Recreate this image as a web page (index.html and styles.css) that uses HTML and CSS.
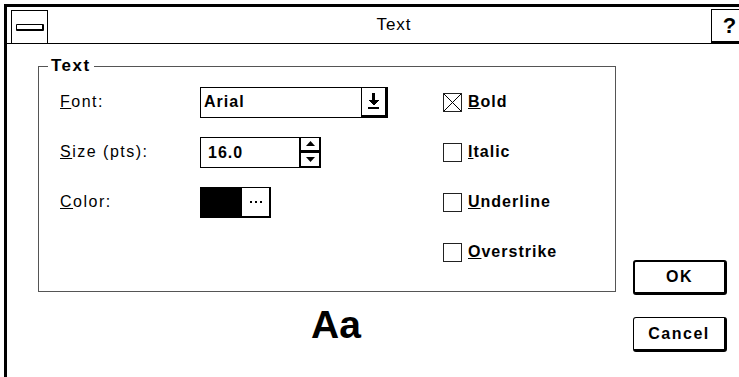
FILE: index.html
```html
<!DOCTYPE html>
<html lang="en">
<head>
<meta charset="UTF-8" />
<title>Text</title>
<link rel="stylesheet" href="styles.css">
</head>
<body>
    <div class="window">
        <div class="titlebar">
            <div class="sysmenu"><span class="sysmenu-bar"></span></div>
            <div class="title">Text</div>
            <div class="help">?</div>
        </div>

        <div class="content">
            <div class="main">
                <fieldset class="group">
                    <legend>Text</legend>
                    <div class="fields">
                        <label class="label"><u>F</u>ont:</label>
                        <div class="combo">
                            <span class="combo-text">Arial</span>
                            <span class="combo-btn">
                                <svg width="11" height="16" viewBox="0 0 11 16" shape-rendering="crispEdges">
                                    <rect x="4" y="0" width="3" height="7" fill="#000" />
                                    <polygon points="0,7 11,7 5.5,12.5" fill="#000" />
                                    <rect x="0" y="14" width="11" height="2" fill="#000" />
                                </svg>
                            </span>
                        </div>
                        <label class="check"><span class="box">
                            <svg width="17" height="17" viewBox="0 0 17 17">
                                <line x1="0" y1="0" x2="17" y2="17" stroke="#000" stroke-width="1" />
                                <line x1="17" y1="0" x2="0" y2="17" stroke="#000" stroke-width="1" />
                            </svg>
                        </span><span><u>B</u>old</span></label>

                        <label class="label"><u>S</u>ize (pts):</label>
                        <div class="size">
                            <span class="size-input">16.0</span>
                            <span class="spin">
                                <span class="spin-half">
                                    <svg width="9" height="5" viewBox="0 0 9 5"><polygon points="0,5 9,5 4.5,0" fill="#000" /></svg>
                                </span>
                                <span class="spin-half">
                                    <svg width="9" height="5" viewBox="0 0 9 5"><polygon points="0,0 9,0 4.5,5" fill="#000" /></svg>
                                </span>
                            </span>
                        </div>
                        <label class="check"><span class="box"></span><span><u>I</u>talic</span></label>

                        <label class="label"><u>C</u>olor:</label>
                        <div class="color">
                            <span class="swatch"></span>
                            <span class="dots">
                                <svg width="12" height="2" viewBox="0 0 12 2" shape-rendering="crispEdges">
                                    <rect x="0" y="0" width="2" height="2" fill="#000" />
                                    <rect x="5" y="0" width="2" height="2" fill="#000" />
                                    <rect x="10" y="0" width="2" height="2" fill="#000" />
                                </svg>
                            </span>
                        </div>
                        <label class="check"><span class="box"></span><span><u>U</u>nderline</span></label>

                        <label class="check"><span class="box"></span><span><u>O</u>verstrike</span></label>
                    </div>
                </fieldset>

                <div class="sample">Aa</div>
            </div>

            <div class="side">
                <button class="btn btn-default">OK</button>
                <button class="btn">Cancel</button>
            </div>
        </div>
    </div>
</body>
</html>
```

FILE: styles.css
```css
* {
    margin:0px;
    padding:0px;
    box-sizing:border-box;
}

html, body {
    background-color:#fff;
    overflow:hidden;
}

body {
    width:739px;
    height:377px;
    font-family:'Liberation Sans', Arial, sans-serif;
    font-size:16px;
    color:#000;
}

.window {
    margin:4px 0px 0px 4px;
    width:746px;
    height:373px;
    border:3px solid #000;
    border-bottom:0px;
}

/* title bar */
.titlebar {
    display:flex;
    height:37px;
    border-bottom:1px solid #000;
}

.sysmenu {
    display:flex;
    align-items:center;
    justify-content:center;
    margin:3px 0px 0px 4px;
    width:37px;
    border:1px solid #000;
    border-bottom:0px;
}

.sysmenu-bar {
    display:block;
    width:28px;
    height:7px;
    border:1px solid #000;
    border-right-width:2px;
    border-bottom-width:2px;
    border-radius:1px;
}

.title {
    flex:1;
    padding-left:29px;
    font-size:17px;
    line-height:36px;
    text-align:center;
    letter-spacing:1px;
}

.help {
    margin-top:2px;
    width:36px;
    border-top:1px solid #000;
    border-left:1px solid #000;
    border-bottom:2px solid #000;
    font-size:22px;
    font-weight:bold;
    line-height:31px;
    text-align:center;
}

/* dialog body */
.content {
    display:flex;
    padding-left:31px;
}

.main {
    width:578px;
}

.group {
    margin-top:13px;
    height:235px;
    min-width:0px;
    padding:2px 0px 0px 0px;
    border:1px solid #555;
}

legend {
    margin-left:9px;
    padding:0px 3px;
    font-size:17px;
    font-weight:bold;
    line-height:18px;
    letter-spacing:1.5px;
}

.fields {
    display:grid;
    grid-template-columns:140px 243px auto;
    grid-auto-rows:50px;
    align-items:center;
    padding-left:21px;
}

.label {
    letter-spacing:1.5px;
}

.combo {
    display:flex;
    width:188px;
    height:31px;
    border:1px solid #000;
}

.combo-text {
    flex:1;
    padding-left:3px;
    font-weight:bold;
    line-height:28px;
    letter-spacing:1px;
}

.combo-btn {
    display:flex;
    align-items:center;
    justify-content:center;
    width:26px;
    border-left:1px solid #000;
    border-right:2px solid #000;
    border-bottom:2px solid #000;
}

.size, .color {
    display:flex;
}

.size-input {
    width:100px;
    height:31px;
    padding-left:7px;
    border:1px solid #000;
    font-weight:bold;
    line-height:29px;
    letter-spacing:1px;
}

.spin {
    display:flex;
    flex-direction:column;
    width:21px;
    height:31px;
}

.spin-half {
    display:flex;
    align-items:center;
    justify-content:center;
    flex:1;
    border:1px solid #000;
    border-right-width:2px;
    border-bottom-width:2px;
}

.swatch {
    width:41px;
    height:31px;
    background-color:#000;
}

.dots {
    display:flex;
    align-items:center;
    justify-content:center;
    width:30px;
    height:31px;
    border:1px solid #000;
    border-right-width:2px;
    border-bottom-width:2px;
}

.check {
    display:flex;
    align-items:center;
    gap:6px;
    grid-column:3;
    font-weight:bold;
    letter-spacing:1px;
}

.box {
    display:flex;
    width:19px;
    height:19px;
    border:1px solid #222;
}

.sample {
    margin-top:11px;
    padding-left:18px;
    font-size:39px;
    font-weight:bold;
    line-height:44px;
    text-align:center;
}

/* buttons */
.side {
    display:flex;
    flex-direction:column;
    gap:22px;
    margin-left:17px;
    padding-top:216px;
}

.btn {
    width:94px;
    height:35px;
    border:1px solid #000;
    border-right-width:3px;
    border-bottom-width:3px;
    border-radius:3px;
    background-color:#fff;
    font-family:'Liberation Sans', Arial, sans-serif;
    font-size:16px;
    font-weight:bold;
    letter-spacing:1.5px;
    color:#000;
}

.btn-default {
    border-top-width:2px;
    border-left-width:2px;
}
```
